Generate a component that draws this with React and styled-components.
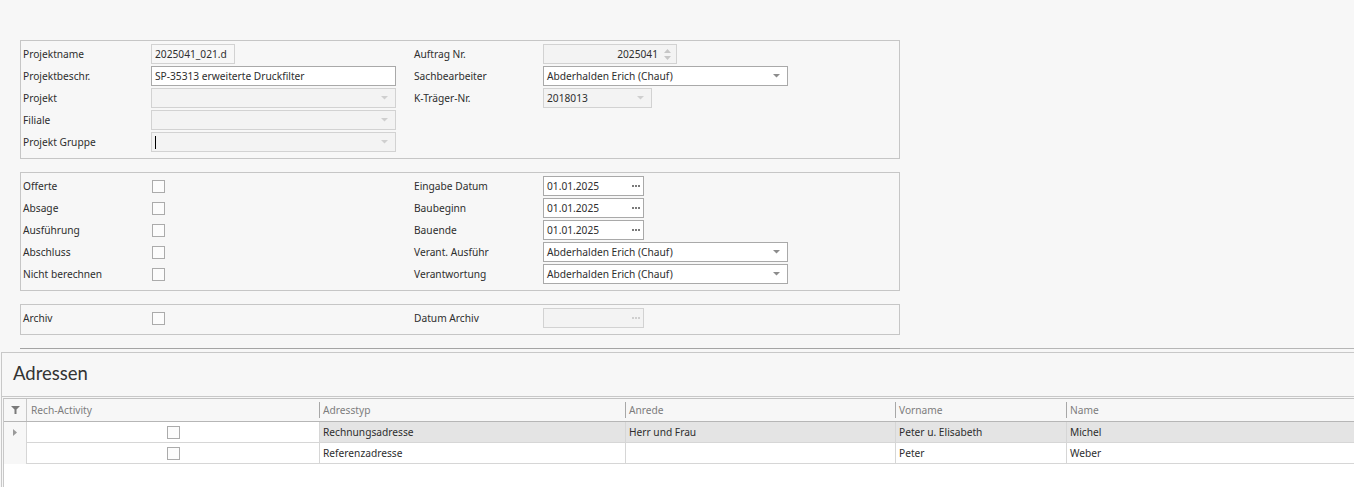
import React from "react";
import styled, { createGlobalStyle } from "styled-components";

const GlobalStyle = createGlobalStyle`
  html, body {
    margin: 0;
    padding: 0;
    background: #f7f7f7;
  }
  body {
    font-family: "Noto Sans", "Liberation Sans", sans-serif;
    font-size: 10.2px;
    color: #2e2e2e;
  }
`;

const Page = styled.div`
  width: 1354px;
  height: 487px;
  overflow: hidden;
  display: flex;
  flex-direction: column;
`;

const FormArea = styled.div`
  width: 880px;
  padding: 40px 0 0 20px;
  display: flex;
  flex-direction: column;
  gap: 13px;
`;

const GroupBox = styled.div`
  box-sizing: border-box;
  width: 880px;
  border: 1px solid #c6c6c6;
  padding: 2px 0 5px 2px;
  display: grid;
  grid-template-columns: 391px 1fr;
`;

const Column = styled.div`
  display: flex;
  flex-direction: column;
`;

const Row = styled.div`
  height: 22px;
  display: flex;
  align-items: center;
`;

const Label = styled.div`
  width: ${(p) => p.$w}px;
  flex-shrink: 0;
  line-height: 14px;
  white-space: nowrap;
`;

const Field = styled.div`
  position: relative;
  box-sizing: border-box;
  width: ${(p) => p.$w}px;
  height: 20px;
  border: 1px solid
    ${(p) => (p.$variant === "edit" ? "#a9a9a9" : "#d2d2d2")};
  background: ${(p) =>
    p.$variant === "edit"
      ? "#fff"
      : p.$variant === "disabled"
      ? "#f3f3f3"
      : "transparent"};
  display: flex;
  align-items: center;
  justify-content: ${(p) => (p.$right ? "flex-end" : "flex-start")};
  padding: 0 ${(p) => (p.$right ? "18px" : "3px")} 0 3px;
  line-height: 14px;
  white-space: nowrap;
  overflow: hidden;
`;

const FieldButton = styled.div`
  position: absolute;
  right: ${(p) => p.$right}px;
  top: 0;
  bottom: 0;
  display: flex;
  flex-direction: column;
  justify-content: center;
  gap: ${(p) => p.$gap || 0}px;
`;

const Caret = styled.span`
  display: inline-block;
  width: 1px;
  height: 13px;
  background: #000;
`;

const Checkbox = styled.div`
  box-sizing: border-box;
  width: 13px;
  height: 13px;
  margin-left: ${(p) => p.$ml || 0}px;
  border: 1px solid #ababab;
  background: #fcfcfc;
`;

const Splitter = styled.div`
  margin: 13px 0 0 20px;
  height: 1px;
  background: linear-gradient(to right, #a4a4a4 880px, #b6b6b6 880px);
`;

const Panel = styled.div`
  flex: 1;
  margin: 3px 0 0 1px;
  border-top: 1px solid #c8c8c8;
  border-left: 1px solid #c8c8c8;
  display: flex;
  flex-direction: column;
`;

const PanelTitle = styled.div`
  box-sizing: border-box;
  height: 44px;
  border-bottom: 1px solid #c8c8c8;
  display: flex;
  align-items: center;
  padding: 0 0 3px 11px;
  font-family: "Lato", "Noto Sans", sans-serif;
  font-size: 18.5px;
  color: #333;
`;

const Grid = styled.div`
  flex: 1;
  margin: 1px 0 0 1px;
  border-top: 1px solid #c2c2c2;
  border-left: 1px solid #c8c8c8;
  background: #fff;
  display: flex;
  flex-direction: column;
`;

const cols = "22px 293px 306px 270px 171px 1fr";

const HeaderRow = styled.div`
  display: grid;
  grid-template-columns: ${cols};
  height: 22px;
  border-bottom: 1px solid #b6b6b6;
  background: #f7f7f7;
`;

const HeaderCell = styled.div`
  position: relative;
  display: flex;
  align-items: center;
  justify-content: ${(p) => (p.$center ? "center" : "flex-start")};
  padding-left: ${(p) => (p.$center ? 0 : 4)}px;
  color: #7d7d7d;
  white-space: nowrap;
  border-left: ${(p) => (p.$full ? "1px solid #c8c8c8" : "none")};

  &::before {
    content: "";
    display: ${(p) => (p.$divider ? "block" : "none")};
    position: absolute;
    left: 0;
    top: 3px;
    bottom: 3px;
    width: 1px;
    background: #a8a8a8;
  }
`;

const DataRow = styled.div`
  display: grid;
  grid-template-columns: ${cols};
  height: 21px;
`;

const Cell = styled.div`
  box-sizing: border-box;
  display: flex;
  align-items: center;
  justify-content: ${(p) => (p.$center ? "center" : "flex-start")};
  padding-left: ${(p) => (p.$center ? 0 : 3)}px;
  border-left: 1px solid #d6d6d6;
  border-bottom: 1px solid #d6d6d6;
  background: ${(p) => (p.$selected ? "#e4e4e4" : "#fff")};
  white-space: nowrap;
`;

const IndicatorCell = styled.div`
  display: flex;
  align-items: center;
  padding-left: 9px;
  background: #f7f7f7;
`;

const DropArrow = ({ disabled }) => (
  <svg width="7" height="4" viewBox="0 0 7 4">
    <polygon points="0,0 7,0 3.5,3.5" fill={disabled ? "#cfcfcf" : "#8c8c8c"} />
  </svg>
);

const Dots = ({ disabled }) => (
  <svg width="8" height="2" viewBox="0 0 8 2">
    {[0, 3, 6].map((x) => (
      <rect key={x} x={x} y="0" width="2" height="2" fill={disabled ? "#cfcfcf" : "#7a7a7a"} />
    ))}
  </svg>
);

const Spin = () => (
  <>
    <svg width="7" height="4" viewBox="0 0 7 4">
      <polygon points="3.5,0 7,4 0,4" fill="#c6c6c6" />
    </svg>
    <svg width="7" height="4" viewBox="0 0 7 4">
      <polygon points="0,0 7,0 3.5,4" fill="#c6c6c6" />
    </svg>
  </>
);

const FilterIcon = () => (
  <svg width="9" height="8" viewBox="0 0 9 8">
    <polygon points="0,0 9,0 5.5,3.5 5.5,8 3.5,8 3.5,3.5" fill="#7a7a7a" />
  </svg>
);

const RowArrow = () => (
  <svg width="4" height="7" viewBox="0 0 4 7">
    <polygon points="0,0 4,3.5 0,7" fill="#9a9a9a" />
  </svg>
);

const Combo = ({ w, value, disabled, children }) => (
  <Field $w={w} $variant={disabled ? "disabled" : "edit"}>
    {value}
    {children}
    <FieldButton $right={7}>
      <DropArrow disabled={disabled} />
    </FieldButton>
  </Field>
);

const DateEdit = ({ value, disabled }) => (
  <Field $w={101} $variant={disabled ? "disabled" : "edit"}>
    {value}
    <FieldButton $right={3}>
      <Dots disabled={disabled} />
    </FieldButton>
  </Field>
);

const addresses = [
  { typ: "Rechnungsadresse", anrede: "Herr und Frau", vorname: "Peter u. Elisabeth", name: "Michel", selected: true },
  { typ: "Referenzadresse", anrede: "", vorname: "Peter", name: "Weber" },
];

const statusRows = ["Offerte", "Absage", "Ausführung", "Abschluss", "Nicht berechnen"];

const App = () => {
  return (
    <Page>
      <GlobalStyle />
      <FormArea>
        <GroupBox>
          <Column>
            <Row>
              <Label $w={128}>Projektname</Label>
              <Field $w={84} $variant="readonly">2025041_021.d</Field>
            </Row>
            <Row>
              <Label $w={128}>Projektbeschr.</Label>
              <Field $w={245} $variant="edit">SP-35313 erweiterte Druckfilter</Field>
            </Row>
            <Row>
              <Label $w={128}>Projekt</Label>
              <Combo w={245} disabled />
            </Row>
            <Row>
              <Label $w={128}>Filiale</Label>
              <Combo w={245} disabled />
            </Row>
            <Row>
              <Label $w={128}>Projekt Gruppe</Label>
              <Combo w={245} disabled>
                <Caret />
              </Combo>
            </Row>
          </Column>
          <Column>
            <Row>
              <Label $w={129}>Auftrag Nr.</Label>
              <Field $w={134} $variant="disabled" $right>
                2025041
                <FieldButton $right={5} $gap={3}>
                  <Spin />
                </FieldButton>
              </Field>
            </Row>
            <Row>
              <Label $w={129}>Sachbearbeiter</Label>
              <Combo w={245} value="Abderhalden Erich (Chauf)" />
            </Row>
            <Row>
              <Label $w={129}>K-Träger-Nr.</Label>
              <Combo w={109} value="2018013" disabled />
            </Row>
          </Column>
        </GroupBox>

        <GroupBox>
          <Column>
            {statusRows.map((s) => (
              <Row key={s}>
                <Label $w={128}>{s}</Label>
                <Checkbox $ml={1} />
              </Row>
            ))}
          </Column>
          <Column>
            <Row>
              <Label $w={129}>Eingabe Datum</Label>
              <DateEdit value="01.01.2025" />
            </Row>
            <Row>
              <Label $w={129}>Baubeginn</Label>
              <DateEdit value="01.01.2025" />
            </Row>
            <Row>
              <Label $w={129}>Bauende</Label>
              <DateEdit value="01.01.2025" />
            </Row>
            <Row>
              <Label $w={129}>Verant. Ausführ</Label>
              <Combo w={245} value="Abderhalden Erich (Chauf)" />
            </Row>
            <Row>
              <Label $w={129}>Verantwortung</Label>
              <Combo w={245} value="Abderhalden Erich (Chauf)" />
            </Row>
          </Column>
        </GroupBox>

        <GroupBox>
          <Column>
            <Row>
              <Label $w={128}>Archiv</Label>
              <Checkbox $ml={1} />
            </Row>
          </Column>
          <Column>
            <Row>
              <Label $w={129}>Datum Archiv</Label>
              <DateEdit disabled />
            </Row>
          </Column>
        </GroupBox>
      </FormArea>

      <Splitter />

      <Panel>
        <PanelTitle>Adressen</PanelTitle>
        <Grid>
          <HeaderRow>
            <HeaderCell $center>
              <FilterIcon />
            </HeaderCell>
            <HeaderCell $full>Rech-Activity</HeaderCell>
            <HeaderCell $divider>Adresstyp</HeaderCell>
            <HeaderCell $divider>Anrede</HeaderCell>
            <HeaderCell $divider>Vorname</HeaderCell>
            <HeaderCell $divider>Name</HeaderCell>
          </HeaderRow>
          {addresses.map((a, i) => (
            <DataRow key={i}>
              <IndicatorCell>{a.selected && <RowArrow />}</IndicatorCell>
              <Cell $center>
                <Checkbox />
              </Cell>
              <Cell $selected={a.selected}>{a.typ}</Cell>
              <Cell $selected={a.selected}>{a.anrede}</Cell>
              <Cell $selected={a.selected}>{a.vorname}</Cell>
              <Cell $selected={a.selected}>{a.name}</Cell>
            </DataRow>
          ))}
        </Grid>
      </Panel>
    </Page>
  );
};

export default App;
